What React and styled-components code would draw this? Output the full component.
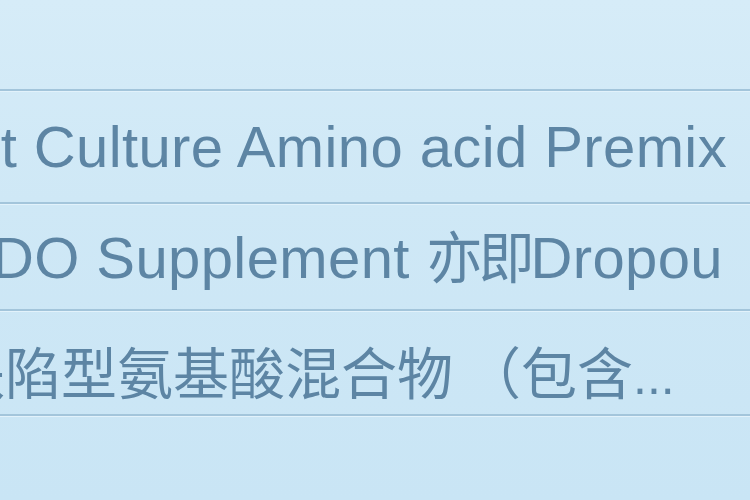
import React from 'react';
import styled, { createGlobalStyle } from 'styled-components';

const GlobalStyle = createGlobalStyle`
    html, body {
        margin : 0;
        padding : 0;
        width : 750px;
        height : 500px;
        overflow : hidden;
        background : #cfe8f6;
    }
`

const Sheet = styled.div`
    display : flex;
    flex-direction : column;
    width : 750px;
    height : 500px;
    overflow : hidden;
    background : linear-gradient(180deg, #d6ecf8 0%, #cfe8f6 40%, #c9e5f5 100%);
    font-family : "Liberation Sans", "Noto Sans CJK SC", sans-serif;
    color : #5d85a4;
`

const Header = styled.div`
    height : 89px;
    flex-shrink : 0;
`

const Row = styled.div`
    display : flex;
    align-items : center;
    height : ${p => p.h}px;
    flex-shrink : 0;
    border-top : 2px solid #a3c5db;
    box-shadow : inset 0 1px 0 #e2f2fb;
    padding-top : ${p => p.pt || 0}px;
    box-sizing : border-box;
    overflow : hidden;
`

const Cell = styled.span`
    display : block;
    white-space : nowrap;
    font-size : 58px;
    line-height : 1;
    letter-spacing : 0.4px;
    text-indent : ${p => p.indent}px;
`

// CJK glyphs run a touch smaller than the latin ones
const Han = styled.span`
    font-size : 56px;
    letter-spacing : ${p => p.tight ? -4 : 0}px;
`

const Paren = styled.span`
    margin-left : 12px;
`

const Dots = styled.span`
    font-size : 50px;
    letter-spacing : 0;
`

const Rest = styled.div`
    flex : 1;
    border-top : 2px solid #a3c5db;
    box-shadow : inset 0 1px 0 #e2f2fb;
`

const App = () => {
    return (
        <>
            <GlobalStyle />
            <Sheet>
                <Header />
                <Row h={113} pt={0}>
                    <Cell indent={-32}>ut Culture Amino acid Premix</Cell>
                </Row>
                <Row h={107} pt={2}>
                    <Cell indent={-8}>DO Supplement <Han tight>亦即</Han>Dropou</Cell>
                </Row>
                <Row h={105} pt={22}>
                    <Cell indent={-51}>
                        <Han>缺陷型氨基酸混合物<Paren>（</Paren>包含</Han><Dots>...</Dots>
                    </Cell>
                </Row>
                <Rest />
            </Sheet>
        </>
    )
}

export default App;
